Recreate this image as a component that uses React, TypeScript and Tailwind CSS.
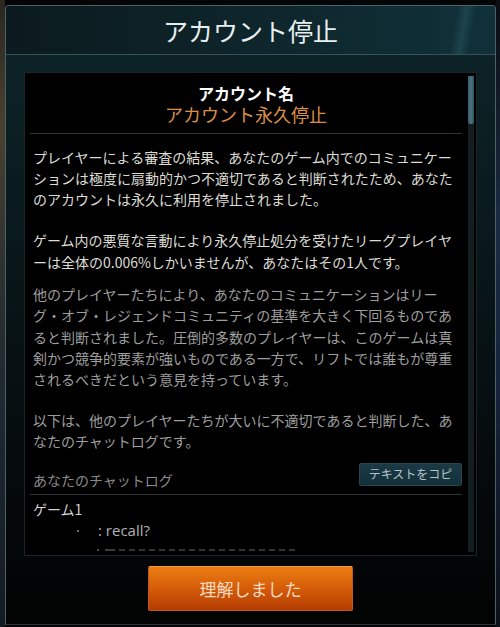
import React from "react";

const P1 = [
  "プレイヤーによる審査の結果、あなたのゲーム内でのコミュニケー",
  "ションは極度に扇動的かつ不適切であると判断されたため、あなた",
  "のアカウントは永久に利用を停止されました。",
];
const P2 = [
  "ゲーム内の悪質な言動により永久停止処分を受けたリーグプレイヤ",
  "ーは全体の0.006%しかいませんが、あなたはその1人です。",
];
const P3 = [
  "他のプレイヤーたちにより、あなたのコミュニケーションはリー",
  "グ・オブ・レジェンドコミュニティの基準を大きく下回るものであ",
  "ると判断されました。圧倒的多数のプレイヤーは、このゲームは真",
  "剣かつ競争的要素が強いものである一方で、リフトでは誰もが尊重",
  "されるべきだという意見を持っています。",
];
const P4 = [
  "以下は、他のプレイヤーたちが大いに不適切であると判断した、あ",
  "なたのチャットログです。",
];

function Lines({ lines, className }: { lines: string[]; className: string }) {
  return (
    <div className={className}>
      {lines.map((l, i) => (
        <div key={i} className="whitespace-nowrap">{l}</div>
      ))}
    </div>
  );
}

export default function App() {
  return (
    <div
      className="flex h-[627px] w-[500px] overflow-hidden bg-[#030506]"
      style={{ fontFamily: '"Noto Sans CJK JP", "Noto Sans", sans-serif' }}
    >
      {/* game backdrop peeking at the sides */}
      <div className="w-[5px] shrink-0 bg-[linear-gradient(180deg,#2a2620_0%,#4a4030_20%,#2b3030_45%,#1c2630_70%,#141a22_100%)]" />

      <div className="mt-[5px] flex h-[620px] w-[491px] shrink-0 flex-col overflow-hidden rounded-t-[4px] border border-[#4d6166] border-b-[#2a3336] bg-[linear-gradient(180deg,#0e252a_0%,#0a1b1f_30%,#050a0c_75%,#020303_100%)]">
        {/* header */}
        <div className="relative flex h-[49px] shrink-0 items-center justify-center border-b border-[#36525a] bg-[linear-gradient(90deg,#0b1a1e_0%,#0e262c_55%,#10313a_100%)]">
          <div className="absolute inset-y-0 right-[12px] w-[40px] bg-[linear-gradient(100deg,transparent_30%,rgba(90,160,170,0.18)_50%,transparent_70%)]" />
          <span className="relative text-[25px] leading-none text-[#e9eff0]">アカウント停止</span>
        </div>

        <div className="flex flex-1 flex-col px-[18px] pt-[17px]">
          {/* black panel */}
          <div className="flex h-[484px] shrink-0 border border-[#1c2628] bg-black pl-[5px]">
            <div className="h-full w-[432px] overflow-hidden">
              <div className="pt-[11px] text-center">
                <div className="text-[16px] font-bold leading-[19px] text-white">アカウント名</div>
                <div className="mt-[1px] text-[18px] leading-[21px] text-[#db8f48]">アカウント永久停止</div>
              </div>
              <div className="mt-[8px] h-px bg-[#2c3537]" />

              <div className="pl-[3px] text-[14px] leading-[21.3px]">
                <Lines lines={P1} className="mt-[12.5px] text-[#dcdcd5]" />
                <Lines lines={P2} className="mt-[20px] text-[#dcdcd5]" />
                <Lines lines={P3} className="mt-[11px] text-[#9e9e9e]" />
                <Lines lines={P4} className="mt-[19.5px] text-[#9e9e9e]" />
              </div>

              <div className="mt-[10px] flex items-start justify-between">
                <div className="mt-[7px] pl-[3px] text-[14px] leading-[21.3px] text-[#8a8a8a]">あなたのチャットログ</div>
                <button className="flex h-[23px] w-[103px] items-center justify-center rounded-[2px] border border-[#284650] bg-[linear-gradient(180deg,#1b3a45_0%,#12303a_100%)] text-[12px] text-[#b5c3c7]">
                  テキストをコピ
                </button>
              </div>
              <div className="mt-[3.5px] h-px bg-[#2c3537]" />

              <div className="mt-[3.5px] pl-[3px] text-[14px] leading-[21.3px]">
                <div className="text-[#d2d2d2]">ゲーム1</div>
                <div className="flex items-center text-[#b2b2b2]">
                  <span className="ml-[44px] mr-[19px] h-[2px] w-[2px] bg-[#6a6a6a]" />
                  <span className="text-[15px]" style={{ fontFamily: '"Open Sans", sans-serif' }}>: recall?</span>
                </div>
                <div className="mt-[8px] flex items-start">
                  <span className="ml-[64px] h-[2px] w-[2px] bg-[#4a4a4a]" />
                  <span className="ml-[6px] h-[2px] w-[10px] bg-[#3c3c3c]" />
                  <span className="ml-[4px] h-[2px] w-[176px] border-t-2 border-dashed border-[#333]" />
                </div>
              </div>
            </div>

            {/* scrollbar */}
            <div className="mt-[3px] mb-[3px] ml-[6px] w-[6px] bg-[#141e20]">
              <div className="h-[48px] rounded-b-[2px] bg-[linear-gradient(90deg,#3a5d6b,#4a7282,#35525e)]" />
            </div>
          </div>

          {/* confirm */}
          <div className="mt-[10px] flex justify-center">
            <button className="flex h-[45px] w-[205px] items-center justify-center rounded-[2px] border border-[#c2581c] border-t-[#f39a3a] bg-[linear-gradient(180deg,#ea7d12_0%,#d55c08_50%,#b43c02_100%)] text-[17px] text-[#f8dcc6]">
              理解しました
            </button>
          </div>
        </div>
      </div>

      <div className="w-[4px] shrink-0 bg-[linear-gradient(180deg,#0a0d12_0%,#1a2a40_35%,#16243a_60%,#0c1018_100%)]" />
    </div>
  );
}
